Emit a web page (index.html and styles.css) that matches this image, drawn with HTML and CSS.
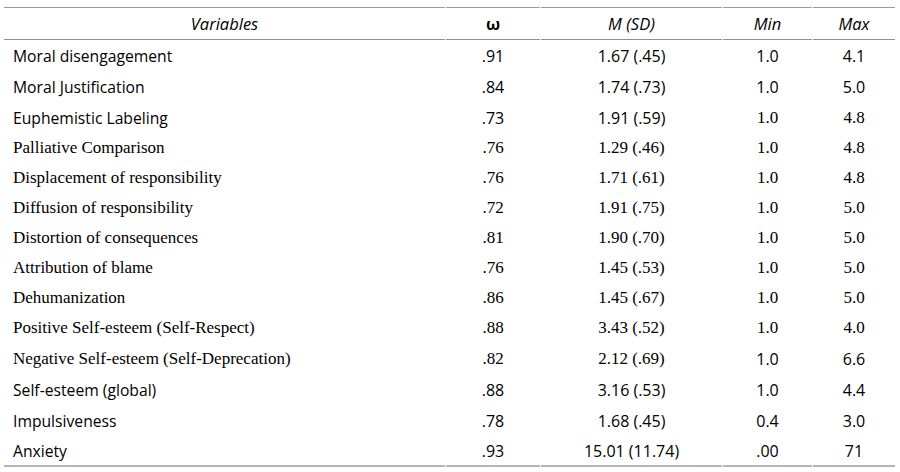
FILE: index.html
```html
<!DOCTYPE html>
<html lang="en">
<head>
<meta charset="utf-8">
<title>Descriptive statistics</title>
<link rel="stylesheet" href="styles.css">
</head>
<body>
<table class="stats">
  <colgroup>
    <col class="c-var"><col class="c-om"><col class="c-m"><col class="c-min"><col class="c-max">
  </colgroup>
  <thead>
    <tr>
      <th class="hd">Variables</th>
      <th class="hd omega">ω</th>
      <th class="hd">M (SD)</th>
      <th class="hd">Min</th>
      <th class="hd">Max</th>
    </tr>
  </thead>
  <tbody>
    <tr class="r31">
      <td class="name sans">Moral disengagement</td><td class="sans">.91</td><td class="sans">1.67 (.45)</td><td class="sans">1.0</td><td class="sans">4.1</td>
    </tr>
    <tr class="r31">
      <td class="name sans">Moral Justification</td><td class="sans">.84</td><td class="sans">1.74 (.73)</td><td class="sans">1.0</td><td class="sans">5.0</td>
    </tr>
    <tr class="r31">
      <td class="name sans">Euphemistic Labeling</td><td class="sans">.73</td><td class="sans">1.91 (.59)</td><td class="serif">1.0</td><td class="serif">4.8</td>
    </tr>
    <tr class="r30">
      <td class="name serif">Palliative Comparison</td><td class="serif">.76</td><td class="serif">1.29 (.46)</td><td class="serif">1.0</td><td class="serif">4.8</td>
    </tr>
    <tr class="r30">
      <td class="name serif">Displacement of responsibility</td><td class="serif">.76</td><td class="serif">1.71 (.61)</td><td class="serif">1.0</td><td class="serif">4.8</td>
    </tr>
    <tr class="r30">
      <td class="name serif">Diffusion of responsibility</td><td class="serif">.72</td><td class="serif">1.91 (.75)</td><td class="serif">1.0</td><td class="serif">5.0</td>
    </tr>
    <tr class="r30">
      <td class="name serif">Distortion of consequences</td><td class="serif">.81</td><td class="serif">1.90 (.70)</td><td class="serif">1.0</td><td class="serif">5.0</td>
    </tr>
    <tr class="r30">
      <td class="name serif">Attribution of blame</td><td class="serif">.76</td><td class="serif">1.45 (.53)</td><td class="serif">1.0</td><td class="serif">5.0</td>
    </tr>
    <tr class="r30">
      <td class="name serif">Dehumanization</td><td class="serif">.86</td><td class="serif">1.45 (.67)</td><td class="serif">1.0</td><td class="serif">5.0</td>
    </tr>
    <tr class="r30">
      <td class="name serif">Positive Self-esteem (Self-Respect)</td><td class="serif">.88</td><td class="serif">3.43 (.52)</td><td class="serif">1.0</td><td class="serif">4.0</td>
    </tr>
    <tr class="r31">
      <td class="name serif">Negative Self-esteem (Self-Deprecation)</td><td class="serif">.82</td><td class="serif">2.12 (.69)</td><td class="sans">1.0</td><td class="sans">6.6</td>
    </tr>
    <tr class="r31">
      <td class="name sans">Self-esteem (global)</td><td class="sans">.88</td><td class="sans">3.16 (.53)</td><td class="sans">1.0</td><td class="sans">4.4</td>
    </tr>
    <tr class="r31">
      <td class="name sans">Impulsiveness</td><td class="sans">.78</td><td class="sans">1.68 (.45)</td><td class="sans">0.4</td><td class="sans">3.0</td>
    </tr>
    <tr class="r31 last">
      <td class="name sans">Anxiety</td><td class="sans">.93</td><td class="sans">15.01 (11.74)</td><td class="sans">.00</td><td class="sans">71</td>
    </tr>
  </tbody>
</table>
</body>
</html>
```
FILE: styles.css
```css
html, body {
  background: #ffffff;
}
body {
  margin: 7px 5px 0 3px;
  color: #000000;
  font-family: "Open Sans", "Noto Sans", sans-serif;
}
.stats {
  width: 892px;
  table-layout: fixed;
  border-collapse: separate;
  border-spacing: 1px 0;
}
.c-var { width: 441px; }
.c-om { width: 94px; }
.c-m { width: 181px; }
.c-min { width: 89px; }
.c-max { width: 82px; }

.stats th, .stats td {
  padding: 0;
  text-align: center;
  vertical-align: middle;
}
.stats thead th {
  height: 31px;
  border-top: 1px solid #9a9a9a;
  border-bottom: 1px solid #8f8f8f;
  font-style: italic;
  font-weight: normal;
  font-size: 16.5px;
  font-family: "Open Sans", "Noto Sans", sans-serif;
}
.stats thead th.omega {
  font-style: normal;
  font-weight: bold;
}
.stats td.name {
  text-align: left;
  padding-left: 9px;
}
.sans {
  font-family: "Open Sans", "Noto Sans", sans-serif;
  font-size: 16px;
}
.stats td.name.sans {
  font-size: 15.7px;
}
.serif {
  font-family: "Liberation Serif", "Times New Roman", serif;
  font-size: 17px;
}
.r31 { height: 31px; }
.r30 { height: 30px; }
.last td {
  border-bottom: 2px solid #b4b4b4;
}
```
